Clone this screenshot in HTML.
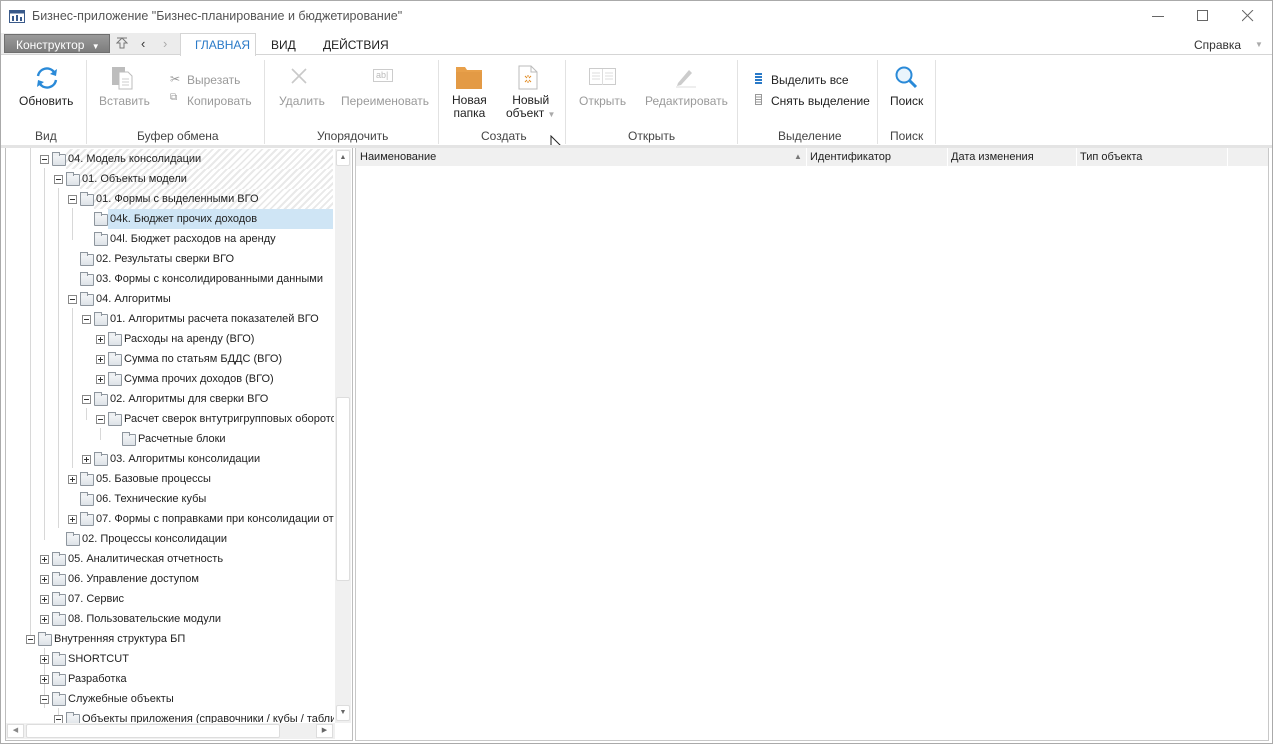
<!DOCTYPE html>
<html><head><meta charset="utf-8"><style>
*{margin:0;padding:0;box-sizing:border-box}
body{width:1273px;height:744px;overflow:hidden;background:#fff;font-family:"Liberation Sans","DejaVu Sans",sans-serif;font-size:12px;color:#222;position:relative}
.a{position:absolute;white-space:nowrap}
.win{position:absolute;left:0;top:0;width:1273px;height:744px;border:1px solid #aaa}
.g{color:#9a9a9a}
.sep{position:absolute;top:60px;width:1px;height:84px;background:#e2e2e2}
.gl{position:absolute;top:129px;color:#444;font-size:12px}
.r{position:absolute;height:20px;line-height:20px;left:0;width:334px;overflow:hidden;font-size:11px}
.x{position:absolute;top:6px;width:9px;height:9px;border:1px solid #888;background:#fff}
.x:before{content:"";position:absolute;left:1px;top:3px;width:5px;height:1px;background:#333}
.x.p:after{content:"";position:absolute;left:3px;top:1px;width:1px;height:5px;background:#333}
.f{position:absolute;top:5px;width:14px;height:12px;border:1px solid #8e969e;border-radius:1px;background:linear-gradient(#f4f6f8,#dde2e7)}
.f:before{content:"";position:absolute;left:-1px;top:-3px;width:6px;height:3px;border:1px solid #8e969e;border-bottom:none;background:#eef0f2}
.t{position:absolute;top:0;white-space:nowrap}
.h{background:repeating-linear-gradient(135deg,#fff 0 3px,#e9e9e9 3px 5px)}
.vl{position:absolute;width:1px;background:#d8d8d8}
</style></head><body>
<div class="win"></div>
<svg class="a" style="left:9px;top:10px" width="16" height="13"><rect x="0.5" y="0.5" width="15" height="12" fill="#fff" stroke="#3a5a8a"/><rect x="0.5" y="0.5" width="15" height="3" fill="#3a5a8a"/><rect x="3" y="6" width="2" height="5" fill="#3a5a8a"/><rect x="7" y="5" width="2" height="6" fill="#3a5a8a"/><rect x="11" y="7" width="2" height="4" fill="#3a5a8a"/></svg>
<div class="a" style="left:32px;top:9px;color:#555;font-size:12.5px">Бизнес-приложение "Бизнес-планирование и бюджетирование"</div>
<div class="a" style="left:1152px;top:16px;width:12px;height:1px;background:#666"></div>
<div class="a" style="left:1197px;top:10px;width:11px;height:11px;border:1px solid #666"></div>
<svg class="a" style="left:1242px;top:10px" width="12" height="12"><path d="M0 0L11 11M11 0L0 11" stroke="#666"/></svg>
<div class="a" style="left:1px;top:33px;width:180px;height:21px;background:#ececec"></div>
<div class="a" style="left:4px;top:34px;width:106px;height:19px;background:linear-gradient(#9a9a9a,#7d7d7d);border:1px solid #6f6f6f;color:#fff;padding:3px 0 0 11px">Конструктор <span style="font-size:8px;margin-left:4px">▼</span></div>
<svg class="a" style="left:116px;top:37px" width="12" height="12"><path d="M6 1L1 6H4V11H8V6H11Z" fill="none" stroke="#777"/><path d="M1 1H11" stroke="#777"/></svg>
<div class="a" style="left:141px;top:36px;color:#333;font-size:13px">‹</div>
<div class="a" style="left:163px;top:36px;color:#aaa;font-size:13px">›</div>
<div class="a" style="left:180px;top:33px;width:76px;height:23px;background:#fff;border:1px solid #d5d5d5;border-bottom:none"></div>
<div class="a" style="left:195px;top:38px;color:#2a7ac8">ГЛАВНАЯ</div>
<div class="a" style="left:271px;top:38px">ВИД</div>
<div class="a" style="left:323px;top:38px">ДЕЙСТВИЯ</div>
<div class="a" style="left:1194px;top:38px;color:#333">Справка</div>
<div class="a" style="left:1255px;top:40px;color:#aaa;font-size:8px">▼</div>
<div class="a" style="left:1px;top:54px;width:1271px;height:1px;background:#d5d5d5"></div>
<div class="a" style="left:181px;top:54px;width:74px;height:1px;background:#fff"></div>
<svg class="a" style="left:34px;top:65px" width="26" height="26" viewBox="0 0 26 26"><path d="M4 11A9 9 0 0 1 20 7" fill="none" stroke="#2a8ad8" stroke-width="2.4"/><path d="M23 4L22 11L16 9Z" fill="#2a8ad8"/><path d="M22 15A9 9 0 0 1 6 19" fill="none" stroke="#2a8ad8" stroke-width="2.4"/><path d="M3 22L4 15L10 17Z" fill="#2a8ad8"/></svg>
<div class="a" style="left:19px;top:94px">Обновить</div>
<div class="sep" style="left:86px"></div>
<svg class="a" style="left:111px;top:66px" width="22" height="24"><rect x="1" y="1" width="13" height="18" fill="#bdbdbd"/><path d="M8 6H17L21 10V23H8Z" fill="#fff" stroke="#bdbdbd"/><path d="M11 13H18M11 16H18M11 19H18" stroke="#ccc"/></svg>
<div class="a g" style="left:99px;top:94px">Вставить</div>
<div class="a g" style="left:170px;top:72px">✂</div><div class="a g" style="left:187px;top:73px">Вырезать</div>
<div class="a g" style="left:170px;top:92px;font-size:10px">⧉</div><div class="a g" style="left:187px;top:94px">Копировать</div>
<div class="sep" style="left:264px"></div>
<svg class="a" style="left:291px;top:68px" width="16" height="16"><path d="M1 1L15 15M15 1L1 15" stroke="#c9c9c9" stroke-width="1.6"/></svg>
<div class="a g" style="left:279px;top:94px">Удалить</div>
<div class="a" style="left:373px;top:69px;width:20px;height:13px;border:1px solid #ccc;color:#bbb;font-size:9px;line-height:11px;padding-left:2px">ab|</div>
<div class="a g" style="left:341px;top:94px">Переименовать</div>
<div class="sep" style="left:438px"></div>
<svg class="a" style="left:456px;top:65px" width="26" height="24"><path d="M0 2H9L11 5H26V24H0Z" fill="#e8a04a"/><rect x="0" y="7" width="26" height="17" fill="#e39a45"/></svg>
<div class="a" style="left:452px;top:94px;text-align:center;line-height:13px">Новая<br>папка</div>
<svg class="a" style="left:518px;top:65px" width="20" height="25"><path d="M1 1H13L19 7V24H1Z" fill="#fff" stroke="#bbb"/><path d="M13 1V7H19" fill="none" stroke="#bbb"/><path d="M7 11L9 13M13 11L11 13M7 17L9 15M13 17L11 15M10 10V12M10 16V18" stroke="#e08a20"/></svg>
<div class="a" style="left:506px;top:94px;text-align:center;line-height:13px">Новый<br>объект <span style="color:#aaa;font-size:8px">▼</span></div>
<div class="sep" style="left:565px"></div>
<svg class="a" style="left:589px;top:68px" width="28" height="18"><rect x="0.5" y="0.5" width="26" height="16" fill="none" stroke="#ccc"/><path d="M13.5 1V17M3 5H11M3 8H11M3 11H11M16 5H24M16 8H24M16 11H24" stroke="#ddd"/></svg>
<div class="a g" style="left:579px;top:94px">Открыть</div>
<svg class="a" style="left:674px;top:66px" width="22" height="22"><path d="M4 17L15 4L18 7L7 19L3 20Z" fill="#ccc"/><path d="M2 21H22" stroke="#ddd"/></svg>
<div class="a g" style="left:645px;top:94px">Редактировать</div>
<div class="sep" style="left:737px"></div>
<svg class="a" style="left:755px;top:73px" width="8" height="11"><rect y="0" width="7" height="2" fill="#2a7ac8"/><rect y="3" width="7" height="2" fill="#2a7ac8"/><rect y="6" width="7" height="2" fill="#2a7ac8"/><rect y="9" width="7" height="2" fill="#2a7ac8"/></svg>
<div class="a" style="left:771px;top:73px">Выделить все</div>
<svg class="a" style="left:755px;top:94px" width="8" height="11"><path d="M0.5 0.5H6.5V10.5H0.5ZM0.5 3H6.5M0.5 5.5H6.5M0.5 8H6.5" fill="none" stroke="#999"/></svg>
<div class="a" style="left:771px;top:94px">Снять выделение</div>
<div class="sep" style="left:877px"></div>
<svg class="a" style="left:894px;top:65px" width="24" height="24"><circle cx="10" cy="10" r="7.5" fill="#eaf4fc" stroke="#2a8ad8" stroke-width="2"/><path d="M15.5 15.5L22 22" stroke="#2a8ad8" stroke-width="3"/></svg>
<div class="a" style="left:890px;top:94px">Поиск</div>
<div class="sep" style="left:935px"></div>
<div class="gl" style="left:35px">Вид</div>
<div class="gl" style="left:137px">Буфер обмена</div>
<div class="gl" style="left:317px">Упорядочить</div>
<div class="gl" style="left:481px">Создать</div>
<div class="gl" style="left:628px">Открыть</div>
<div class="gl" style="left:778px">Выделение</div>
<div class="gl" style="left:890px">Поиск</div>
<svg class="a" style="left:550px;top:135px" width="14" height="20"><path d="M1 1V15L4.5 12L7 18L9 17L6.5 11H11Z" fill="#fff" stroke="#222"/></svg>
<div class="a" style="left:1px;top:145px;width:1271px;height:3px;background:#e4e4e4"></div>
<div class="a" style="left:5px;top:148px;width:348px;height:593px;border:1px solid #bdbdbd;border-top:none"></div>
<div class="vl" style="left:30px;top:148px;height:490px"></div>
<div class="vl" style="left:44px;top:168px;height:372px"></div>
<div class="vl" style="left:58px;top:188px;height:340px"></div>
<div class="vl" style="left:72px;top:208px;height:32px"></div>
<div class="vl" style="left:72px;top:308px;height:160px"></div>
<div class="vl" style="left:86px;top:408px;height:12px"></div>
<div class="vl" style="left:100px;top:428px;height:12px"></div>
<div class="vl" style="left:44px;top:648px;height:60px"></div>
<div class="vl" style="left:58px;top:708px;height:12px"></div>

<div class="r" style="top:149px"><div class="a h" style="left:66px;top:0;width:267px;height:20px"></div><div class="x" style="left:40px"></div><div class="f" style="left:52px"></div><span class="t" style="left:68px">04. Модель консолидации</span></div>
<div class="r" style="top:169px"><div class="a h" style="left:80px;top:0;width:253px;height:20px"></div><div class="x" style="left:54px"></div><div class="f" style="left:66px"></div><span class="t" style="left:82px">01. Объекты модели</span></div>
<div class="r" style="top:189px"><div class="a h" style="left:94px;top:0;width:239px;height:20px"></div><div class="x" style="left:68px"></div><div class="f" style="left:80px"></div><span class="t" style="left:96px">01. Формы с выделенными ВГО</span></div>
<div class="r" style="top:209px"><div class="a" style="left:108px;top:0;width:225px;height:20px;background:#cfe5f5"></div><div class="f" style="left:94px"></div><span class="t" style="left:110px">04k. Бюджет прочих доходов</span></div>
<div class="r" style="top:229px"><div class="f" style="left:94px"></div><span class="t" style="left:110px">04l. Бюджет расходов на аренду</span></div>
<div class="r" style="top:249px"><div class="f" style="left:80px"></div><span class="t" style="left:96px">02. Результаты сверки ВГО</span></div>
<div class="r" style="top:269px"><div class="f" style="left:80px"></div><span class="t" style="left:96px">03. Формы с консолидированными данными</span></div>
<div class="r" style="top:289px"><div class="x" style="left:68px"></div><div class="f" style="left:80px"></div><span class="t" style="left:96px">04. Алгоритмы</span></div>
<div class="r" style="top:309px"><div class="x" style="left:82px"></div><div class="f" style="left:94px"></div><span class="t" style="left:110px">01. Алгоритмы расчета показателей ВГО</span></div>
<div class="r" style="top:329px"><div class="x p" style="left:96px"></div><div class="f" style="left:108px"></div><span class="t" style="left:124px">Расходы на аренду (ВГО)</span></div>
<div class="r" style="top:349px"><div class="x p" style="left:96px"></div><div class="f" style="left:108px"></div><span class="t" style="left:124px">Сумма по статьям БДДС (ВГО)</span></div>
<div class="r" style="top:369px"><div class="x p" style="left:96px"></div><div class="f" style="left:108px"></div><span class="t" style="left:124px">Сумма прочих доходов (ВГО)</span></div>
<div class="r" style="top:389px"><div class="x" style="left:82px"></div><div class="f" style="left:94px"></div><span class="t" style="left:110px">02. Алгоритмы для сверки ВГО</span></div>
<div class="r" style="top:409px"><div class="x" style="left:96px"></div><div class="f" style="left:108px"></div><span class="t" style="left:124px">Расчет сверок внтутригрупповых оборотов</span></div>
<div class="r" style="top:429px"><div class="f" style="left:122px"></div><span class="t" style="left:138px">Расчетные блоки</span></div>
<div class="r" style="top:449px"><div class="x p" style="left:82px"></div><div class="f" style="left:94px"></div><span class="t" style="left:110px">03. Алгоритмы консолидации</span></div>
<div class="r" style="top:469px"><div class="x p" style="left:68px"></div><div class="f" style="left:80px"></div><span class="t" style="left:96px">05. Базовые процессы</span></div>
<div class="r" style="top:489px"><div class="f" style="left:80px"></div><span class="t" style="left:96px">06. Технические кубы</span></div>
<div class="r" style="top:509px"><div class="x p" style="left:68px"></div><div class="f" style="left:80px"></div><span class="t" style="left:96px">07. Формы с поправками при консолидации отчетности</span></div>
<div class="r" style="top:529px"><div class="f" style="left:66px"></div><span class="t" style="left:82px">02. Процессы консолидации</span></div>
<div class="r" style="top:549px"><div class="x p" style="left:40px"></div><div class="f" style="left:52px"></div><span class="t" style="left:68px">05. Аналитическая отчетность</span></div>
<div class="r" style="top:569px"><div class="x p" style="left:40px"></div><div class="f" style="left:52px"></div><span class="t" style="left:68px">06. Управление доступом</span></div>
<div class="r" style="top:589px"><div class="x p" style="left:40px"></div><div class="f" style="left:52px"></div><span class="t" style="left:68px">07. Сервис</span></div>
<div class="r" style="top:609px"><div class="x p" style="left:40px"></div><div class="f" style="left:52px"></div><span class="t" style="left:68px">08. Пользовательские модули</span></div>
<div class="r" style="top:629px"><div class="x" style="left:26px"></div><div class="f" style="left:38px"></div><span class="t" style="left:54px">Внутренняя структура БП</span></div>
<div class="r" style="top:649px"><div class="x p" style="left:40px"></div><div class="f" style="left:52px"></div><span class="t" style="left:68px">SHORTCUT</span></div>
<div class="r" style="top:669px"><div class="x p" style="left:40px"></div><div class="f" style="left:52px"></div><span class="t" style="left:68px">Разработка</span></div>
<div class="r" style="top:689px"><div class="x" style="left:40px"></div><div class="f" style="left:52px"></div><span class="t" style="left:68px">Служебные объекты</span></div>
<div class="r" style="top:709px;height:14px"><div class="x" style="left:54px"></div><div class="f" style="left:66px"></div><span class="t" style="left:82px">Объекты приложения (справочники / кубы / таблицы)</span></div>
<div class="a" style="left:335px;top:149px;width:16px;height:574px;background:#f0f0f0"></div>
<div class="a" style="left:336px;top:150px;width:14px;height:16px;background:#fff;border:1px solid #ddd;border-radius:2px;font-size:7px;color:#666;text-align:center;line-height:14px">▲</div>
<div class="a" style="left:336px;top:397px;width:14px;height:184px;background:#fff;border:1px solid #ddd;border-radius:2px"></div>
<div class="a" style="left:336px;top:705px;width:14px;height:16px;background:#fff;border:1px solid #ddd;border-radius:2px;font-size:7px;color:#666;text-align:center;line-height:14px">▼</div>
<div class="a" style="left:6px;top:723px;width:329px;height:16px;background:#f0f0f0"></div>
<div class="a" style="left:7px;top:724px;width:17px;height:14px;background:#fff;border:1px solid #ddd;font-size:7px;color:#888;text-align:center;line-height:12px">◀</div>
<div class="a" style="left:26px;top:724px;width:254px;height:14px;background:#fff;border:1px solid #ddd;border-radius:2px"></div>
<div class="a" style="left:316px;top:724px;width:17px;height:14px;background:#fff;border:1px solid #ddd;font-size:7px;color:#666;text-align:center;line-height:12px">▶</div>
<div class="a" style="left:355px;top:148px;width:914px;height:593px;border:1px solid #c8c8c8;border-top:none"></div>
<div class="a" style="left:356px;top:148px;width:912px;height:18px;background:#f0f0f0"></div>
<div class="a" style="left:360px;top:151px;font-size:11px">Наименование</div>
<div class="a" style="left:794px;top:152px;font-size:8px;color:#777">▲</div>
<div class="a" style="left:806px;top:148px;width:1px;height:18px;background:#fff"></div>
<div class="a" style="left:810px;top:151px;font-size:11px">Идентификатор</div>
<div class="a" style="left:947px;top:148px;width:1px;height:18px;background:#fff"></div>
<div class="a" style="left:951px;top:151px;font-size:11px">Дата изменения</div>
<div class="a" style="left:1076px;top:148px;width:1px;height:18px;background:#fff"></div>
<div class="a" style="left:1080px;top:151px;font-size:11px">Тип объекта</div>
<div class="a" style="left:1227px;top:148px;width:1px;height:18px;background:#fff"></div>
</body></html>
